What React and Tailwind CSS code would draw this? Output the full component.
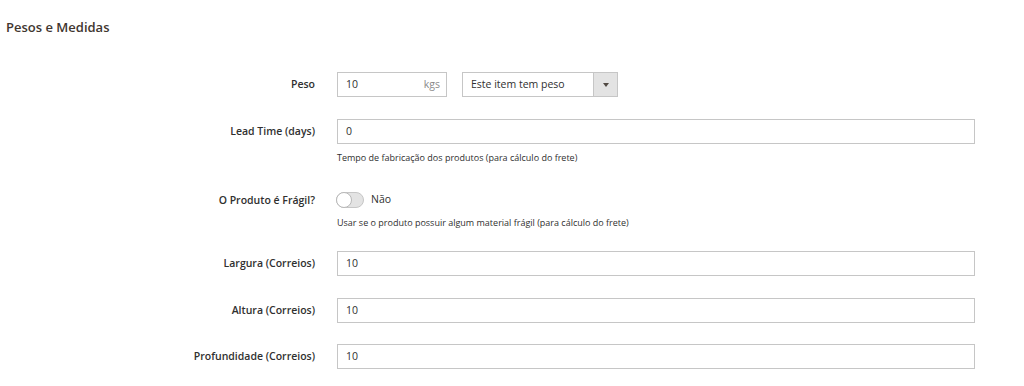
import React from "react";

function Label({ children }) {
  return (
    <div className="w-[315px] shrink-0 text-right text-[10.5px] font-semibold leading-[25px] text-[#303030]">
      {children}
    </div>
  );
}

function TextInput({ value }) {
  return (
    <div className="ml-[22px] flex h-[25px] w-[638px] items-center border border-[#c6c6c6] bg-white pl-[8px] text-[10.5px] text-[#303030]">
      {value}
    </div>
  );
}

function Help({ children, className = "" }) {
  return (
    <div className={"ml-[337px] text-[9px] leading-[12px] text-[#303030] " + className}>
      {children}
    </div>
  );
}

export default function App() {
  return (
    <div className="h-[386px] w-[1024px] overflow-hidden bg-white font-['Open_Sans',sans-serif]">
      <h2 className="pl-[6px] pt-[18px] text-[13px] font-semibold leading-[18px] text-[#41362f]">
        Pesos e Medidas
      </h2>

      {/* Peso */}
      <div className="mt-[36px] flex items-start">
        <Label>Peso</Label>
        <div className="ml-[22px] flex items-center">
          <div className="flex h-[25px] w-[110px] items-center justify-between border border-[#c6c6c6] bg-white pl-[8px] pr-[6px] text-[10.5px]">
            <span className="text-[#303030]">10</span>
            <span className="text-[#8a8a8a]">kgs</span>
          </div>
          <div className="ml-[15px] flex h-[25px] w-[156px] items-stretch border border-[#c6c6c6] bg-white text-[10.5px] text-[#303030]">
            <div className="flex flex-1 items-center pl-[8px]">Este item tem peso</div>
            <div className="flex w-[24px] items-center justify-center border-l border-[#c6c6c6] bg-[#e3e3e3]">
              <svg width="6" height="4" viewBox="0 0 6 4">
                <path d="M0 0 L6 0 L3 4 Z" fill="#514943" />
              </svg>
            </div>
          </div>
        </div>
      </div>

      {/* Lead Time */}
      <div className="mt-[22px] flex items-start">
        <Label>Lead Time (days)</Label>
        <TextInput value="0" />
      </div>
      <Help className="mt-[8px]">Tempo de fabricação dos produtos (para cálculo do frete)</Help>

      {/* Fragil */}
      <div className="mt-[26px] flex h-[20px] items-center">
        <div className="w-[315px] shrink-0 text-right text-[10.5px] font-semibold leading-[20px] text-[#303030]">
          O Produto é Frágil?
        </div>
        <div className="ml-[21px] flex items-center">
          <div className="relative h-[16px] w-[28px] rounded-full border border-[#c6c6c6] bg-[#e3e3e3]">
            <div className="absolute -left-px -top-px h-[16px] w-[16px] rounded-full border border-[#b8b8b8] bg-white" />
          </div>
          <span className="ml-[7px] text-[10.5px] text-[#303030]">Não</span>
        </div>
      </div>
      <Help className="mt-[7px]">Usar se o produto possuir algum material frágil (para cálculo do frete)</Help>

      {/* Largura */}
      <div className="mt-[22px] flex items-start">
        <Label>Largura (Correios)</Label>
        <TextInput value="10" />
      </div>

      {/* Altura */}
      <div className="mt-[22px] flex items-start">
        <Label>Altura (Correios)</Label>
        <TextInput value="10" />
      </div>

      {/* Profundidade */}
      <div className="mt-[21px] flex items-start">
        <Label>Profundidade (Correios)</Label>
        <TextInput value="10" />
      </div>
    </div>
  );
}
